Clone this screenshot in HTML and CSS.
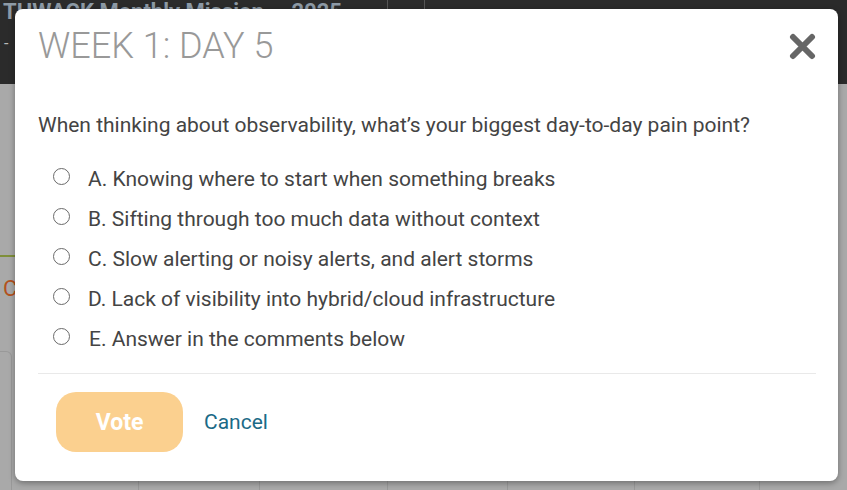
FILE: index.html
```html
<!DOCTYPE html>
<html>
<head>
<meta charset="utf-8">
<link rel="stylesheet" href="styles.css">
</head>
<body>
<div class="page">
  <div class="topbar">
    <div class="brand">THWACK Monthly Mission — 2025</div>
    <div class="sep sep-a"></div>
    <div class="sep sep-b"></div>
    <div class="sub">-</div>
  </div>
  <div class="content">
    <div class="side">
      <div class="green"></div>
      <div class="orange">C</div>
      <div class="card"></div>
    </div>
    <div class="cols">
      <span></span><span></span><span></span><span></span><span></span><span></span>
    </div>
  </div>
</div>

<div class="modal">
  <div class="modal-header">
    <h1 class="title">WEEK 1: DAY 5</h1>
    <button class="close" aria-label="Close">
      <svg width="27" height="27" viewBox="0 0 27 27"><path d="M4 4 L23 23 M23 4 L4 23" stroke="#666" stroke-width="6" stroke-linecap="round"/></svg>
    </button>
  </div>
  <p class="question">When thinking about observability, what’s your biggest day-to-day pain point?</p>
  <ul class="options">
    <li class="option"><span class="radio"></span><span class="label">A. Knowing where to start when something breaks</span></li>
    <li class="option"><span class="radio"></span><span class="label">B. Sifting through too much data without context</span></li>
    <li class="option"><span class="radio"></span><span class="label">C. Slow alerting or noisy alerts, and alert storms</span></li>
    <li class="option"><span class="radio"></span><span class="label">D. Lack of visibility into hybrid/cloud infrastructure</span></li>
    <li class="option"><span class="radio"></span><span class="label label-e">E. Answer in the comments below</span></li>
  </ul>
  <div class="divider"></div>
  <div class="footer">
    <button class="vote">Vote</button>
    <a class="cancel">Cancel</a>
  </div>
</div>
</body>
</html>
```

FILE: styles.css
```css
* { box-sizing: border-box; }
html, body { margin: 0; padding: 0; }
body {
  width: 847px;
  height: 490px;
  overflow: hidden;
  font-family: Roboto, "Liberation Sans", sans-serif;
  background: #a9a9a9;
  position: relative;
}
.page { width: 847px; height: 490px; display: flex; flex-direction: column; overflow: hidden; }
.topbar {
  height: 84px;
  background: #2b2b2b;
  position: relative;
  flex: none;
  overflow: hidden;
}
.brand {
  position: absolute;
  left: 3px;
  top: 0;
  font-size: 22px;
  line-height: 24px;
  font-weight: 700;
  color: #8d9aa6;
  white-space: nowrap;
}
.sub {
  position: absolute;
  left: 4px;
  top: 34px;
  color: #bbb;
  font-size: 16px;
}
.sep { position: absolute; top: 0; width: 1px; height: 30px; background: #555; }
.sep-a { left: 387px; }
.sep-b { left: 424px; }
.content { flex: 1; position: relative; background: #a9a9a9; overflow: hidden; }
.side { width: 15px; padding-top: 171px; }
.green { height: 2px; background: #7f8f3a; }
.orange { color: #b3521d; font-size: 22px; margin-top: 20px; line-height: 24px; margin-left: 3px; }
.card { margin-top: 50px; height: 200px; border: 1px solid #999; border-left: none; border-radius: 0 6px 0 0; width: 12px; }
.cols { position: absolute; left: 0; right: 0; bottom: 0; height: 12px; }
.cols span { position: absolute; top: 0; bottom: 0; width: 1px; background: #999; }
.cols span:nth-child(1) { left: 138px; }
.cols span:nth-child(2) { left: 259px; }
.cols span:nth-child(3) { left: 387px; }
.cols span:nth-child(4) { left: 507px; }
.cols span:nth-child(5) { left: 634px; }
.cols span:nth-child(6) { left: 759px; }

.modal {
  position: absolute;
  left: 15px;
  top: 9px;
  width: 823px;
  height: 472px;
  background: #fff;
  border-radius: 8px;
  box-shadow: 0 2px 6px rgba(0,0,0,0.35);
  padding: 15px 22px 0 23px;
  display: flex;
  flex-direction: column;
}
.modal-header {
  display: flex;
  align-items: center;
  justify-content: space-between;
  height: 44px;
}
.title {
  margin: 0;
  font-size: 36px;
  line-height: 44px;
  font-weight: 300;
  color: #999;
}
.close {
  border: none;
  background: none;
  padding: 0;
  width: 27px;
  height: 27px;
  display: block;
}
.close svg { display: block; }
.question {
  margin: 45px 0 0;
  font-size: 21px;
  line-height: 24px;
  color: #444;
}
.options {
  list-style: none;
  margin: 22px 0 0;
  padding: 0;
}
.option {
  height: 40px;
  display: flex;
  align-items: center;
  font-size: 21px;
  color: #444;
}
.radio {
  width: 17px;
  height: 17px;
  border: 1px solid #6a6a6a;
  border-radius: 50%;
  margin: 0 18px 5px 15px;
  flex: none;
}
.label-e { margin-left: 1px; }
.divider { height: 1px; background: #e9e9e9; margin-top: 14px; }
.footer {
  display: flex;
  align-items: center;
  margin-top: 18px;
  padding-left: 18px;
}
.vote {
  width: 127px;
  height: 60px;
  border: none;
  border-radius: 20px;
  background: #fbd08f;
  color: #fff;
  font-family: Roboto, "Liberation Sans", sans-serif;
  font-size: 23px;
  font-weight: 700;
}
.cancel {
  margin-left: 21px;
  font-size: 21px;
  color: #1b6a87;
}
```
